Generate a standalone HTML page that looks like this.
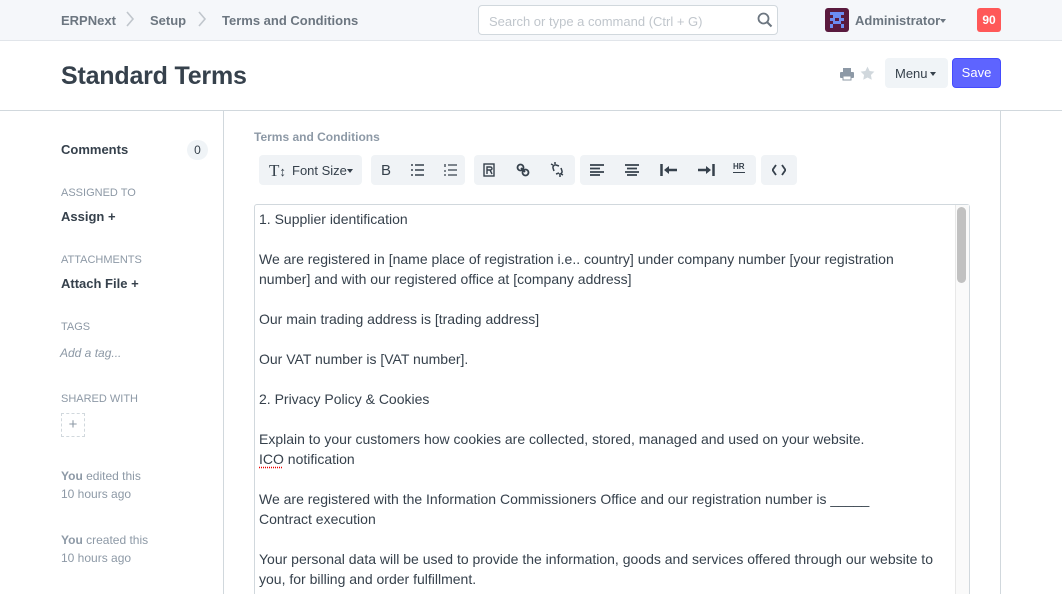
<!DOCTYPE html>
<html style="width:1062px;height:594px;overflow:hidden"><head><meta charset="utf-8"><style>
*{box-sizing:border-box;margin:0;padding:0}
body{width:1062px;height:594px;overflow:hidden;font-family:"Liberation Sans",Helvetica,Arial,sans-serif;background:#fff;color:#36414c;position:relative}
.nav{position:absolute;left:0;top:0;width:1062px;height:41px;background:#f5f7fa;border-bottom:1px solid #e1e5ea}
.abs{position:absolute}
.bc{font-size:13px;font-weight:bold;color:#6c7680;top:13px}
.chev{top:11px;width:10px;height:16px}
.search{left:478px;top:5px;width:300px;height:30px;border:1px solid #d1d8dd;border-radius:4px;background:#fff;font-size:13px;color:#c0c6cc;padding:8px 10px}
.title{left:61px;top:62px;font-size:25px;color:#36414c;font-weight:bold;letter-spacing:-0.2px}
.hline{left:0;top:110px;width:1062px;height:1px;background:#d1d8dd}
.vline{top:110px;width:1px;height:484px;background:#d1d8dd}
.sb{font-size:11px;color:#8d99a6;left:61px}
.sbb{font-size:13px;font-weight:bold;color:#36414c;left:61px}
.tb{top:155px;height:30px;background:#f0f3f6;border-radius:4px}
.ed{left:254px;top:204px;width:716px;height:390px;border:1px solid #d1d8dd;border-bottom:none;border-radius:3px 3px 0 0}
.txt{position:absolute;left:259px;top:209px;font-size:14px;line-height:20px;color:#36414c;white-space:pre;height:385px;overflow:hidden}
</style></head><body>
<div class="nav"></div>
<div class="abs bc" style="left:61px">ERPNext</div>
<svg class="abs chev" style="left:125px" viewBox="0 0 10 16"><path d="M2 1l6 7-6 7" fill="none" stroke="#c0c6cc" stroke-width="1.6"/></svg>
<div class="abs bc" style="left:150px">Setup</div>
<svg class="abs chev" style="left:197px" viewBox="0 0 10 16"><path d="M2 1l6 7-6 7" fill="none" stroke="#c0c6cc" stroke-width="1.6"/></svg>
<div class="abs bc" style="left:222px">Terms and Conditions</div>
<div class="abs search">Search or type a command (Ctrl + G)</div>
<svg class="abs" style="left:757px;top:12px" width="16" height="16" viewBox="0 0 16 16"><circle cx="6.5" cy="6.5" r="5" fill="none" stroke="#6c7680" stroke-width="1.8"/><path d="M10 10l4.5 4.5" stroke="#6c7680" stroke-width="2"/></svg>
<svg class="abs" style="left:825px;top:8px" width="24" height="24" viewBox="0 0 24 24"><rect width="24" height="24" rx="3" fill="#5a1a3e"/><path d="M5 4h14v3h-3v3h3v3h-3v3h3v4h-3v-4H8v4H5v-4h3v-3H5v-3h3V7H5z" fill="#6b8cf2"/><rect x="10" y="10" width="4" height="3" fill="#5a1a3e"/></svg>
<div class="abs" style="left:855px;top:13px;font-size:13px;font-weight:bold;color:#6c7680">Administrator</div>
<div class="abs" style="left:940px;top:19px;width:0;height:0;border-left:3px solid transparent;border-right:3px solid transparent;border-top:4px solid #6c7680"></div>
<div class="abs" style="left:977px;top:8px;width:24px;height:24px;border-radius:3px;background:#ff5858;color:#fff;font-size:12px;font-weight:bold;text-align:center;line-height:24px">90</div>

<div class="abs title">Standard Terms</div>
<svg class="abs" style="left:840px;top:67px" width="14" height="14" viewBox="0 0 14 14"><rect x="3" y="1" width="8" height="4" fill="#8d99a6"/><rect x="0" y="5" width="14" height="6" rx="1" fill="#8d99a6"/><rect x="3" y="9" width="8" height="4" fill="#fff" stroke="#8d99a6"/></svg>
<svg class="abs" style="left:860px;top:66px" width="15" height="15" viewBox="0 0 24 24"><path d="M12 1l3.4 7 7.6 1-5.5 5.3 1.3 7.7L12 18.3 5.2 22l1.3-7.7L1 9l7.6-1z" fill="#d1d8dd"/></svg>
<div class="abs" style="left:885px;top:58px;width:63px;height:30px;background:#f0f4f7;border-radius:4px"></div>
<div class="abs" style="left:895px;top:66px;font-size:13px;color:#36414c">Menu</div>
<div class="abs" style="left:930px;top:72px;width:0;height:0;border-left:3px solid transparent;border-right:3px solid transparent;border-top:4px solid #36414c"></div>
<div class="abs" style="left:952px;top:58px;width:49px;height:30px;background:#5e64ff;border:1px solid #444bff;border-radius:4px;font-size:13px;color:#fff;line-height:28px;text-align:center">Save</div>

<div class="abs hline"></div>
<div class="abs vline" style="left:223px"></div>
<div class="abs vline" style="left:1000px"></div>

<div class="abs sbb" style="top:142px">Comments</div>
<div class="abs" style="left:187px;top:140px;width:21px;height:20px;border-radius:10px;background:#f0f4f7;font-size:12px;text-align:center;line-height:20px">0</div>
<div class="abs sb" style="top:187px">ASSIGNED TO</div>
<div class="abs sbb" style="top:209px">Assign +</div>
<div class="abs sb" style="top:254px">ATTACHMENTS</div>
<div class="abs sbb" style="top:276px">Attach File +</div>
<div class="abs sb" style="top:321px">TAGS</div>
<div class="abs" style="left:60px;top:346px;font-size:12px;font-style:italic;color:#8d99a6">Add a tag...</div>
<div class="abs sb" style="top:393px">SHARED WITH</div>
<div class="abs" style="left:61px;top:413px;width:24px;height:24px;border:1px dashed #d1d8dd;color:#8d99a6;font-size:15px;text-align:center;line-height:21px">+</div>
<div class="abs" style="left:61px;top:467px;font-size:12px;color:#8d99a6;line-height:18px"><b>You</b> edited this<br>10 hours ago</div>
<div class="abs" style="left:61px;top:531px;font-size:12px;color:#8d99a6;line-height:18px"><b>You</b> created this<br>10 hours ago</div>

<div class="abs" style="left:254px;top:130px;font-size:12px;font-weight:bold;color:#8d99a6">Terms and Conditions</div>
<div class="abs tb" style="left:259px;width:103px"></div>
<div class="abs" style="left:269px;top:161px;font-family:'Liberation Serif',serif;font-size:17px;color:#36414c">T<span style="font-size:13px">↕</span></div>
<div class="abs" style="left:292px;top:163px;font-size:13px">Font Size</div>
<div class="abs" style="left:347px;top:169px;border-left:3px solid transparent;border-right:3px solid transparent;border-top:4px solid #36414c"></div>
<div class="abs tb" style="left:371px;width:94px"></div>
<div class="abs" style="left:381px;top:162px;font-size:15px">B</div>
<svg class="abs" style="left:411px;top:164px" width="13" height="12" viewBox="0 0 13 12"><path d="M0 1h2M0 6h2M0 11h2M4 1h9M4 6h9M4 11h9" stroke="#36414c" stroke-width="1.6"/></svg>
<svg class="abs" style="left:444px;top:164px" width="13" height="12" viewBox="0 0 13 12"><path d="M4 1h9M4 6h9M4 11h9M1 0v3M0 7h2M0 11h2" stroke="#36414c" stroke-width="1.3"/></svg>
<div class="abs tb" style="left:474px;width:101px"></div>
<svg class="abs" style="left:483px;top:163px" width="12" height="14" viewBox="0 0 12 14"><rect x="1" y="1" width="10" height="12" fill="none" stroke="#36414c" stroke-width="1.4"/><path d="M4 11V4h3.5a1.5 1.5 0 010 3H4M7 7l2 4" stroke="#36414c" stroke-width="1.4" fill="none"/></svg>
<svg class="abs" style="left:516px;top:163px" width="14" height="14" viewBox="0 0 14 14"><circle cx="4.5" cy="4.5" r="3" fill="none" stroke="#36414c" stroke-width="1.8"/><circle cx="9.5" cy="9.5" r="3" fill="none" stroke="#36414c" stroke-width="1.8"/><path d="M5 5l4 4" stroke="#36414c" stroke-width="1.8"/></svg>
<svg class="abs" style="left:550px;top:162px" width="15" height="15" viewBox="0 0 15 15"><path d="M3 6a2.5 2.5 0 013-3M9 12a2.5 2.5 0 003-3M6 3l3 1M6 12l3-1M12 9l-1-3M3 6l1 3M1 2l2 1M13 13l-2-1M5 0v2M10 15v-2" fill="none" stroke="#36414c" stroke-width="1.5"/></svg>
<div class="abs tb" style="left:580px;width:176px"></div>
<svg class="abs" style="left:590px;top:164px" width="14" height="12" viewBox="0 0 14 12"><path d="M0 1h14M0 4.5h10M0 8h14M0 11h10" stroke="#36414c" stroke-width="1.8"/></svg>
<svg class="abs" style="left:625px;top:164px" width="14" height="12" viewBox="0 0 14 12"><path d="M0 1h14M2 4.5h10M0 8h14M2 11h10" stroke="#36414c" stroke-width="1.8"/></svg>
<svg class="abs" style="left:660px;top:164px" width="18" height="12" viewBox="0 0 18 12"><path d="M1.5 0v12M17 6H7" stroke="#36414c" stroke-width="2.5"/><path d="M4 6l5-4v8z" fill="#36414c"/></svg>
<svg class="abs" style="left:697px;top:164px" width="18" height="12" viewBox="0 0 18 12"><path d="M16.5 0v12M1 6h10" stroke="#36414c" stroke-width="2.5"/><path d="M14 6l-5-4v8z" fill="#36414c"/></svg>
<div class="abs" style="left:733px;top:162px;font-size:8px;font-weight:bold;border-bottom:1.5px solid #36414c;line-height:10px">HR</div>
<div class="abs tb" style="left:761px;width:36px"></div>
<svg class="abs" style="left:772px;top:164px" width="14" height="12" viewBox="0 0 14 12"><path d="M4 1L0.5 6 4 11M10 1l3.5 5-3.5 5" fill="none" stroke="#36414c" stroke-width="1.8"/></svg>

<div class="abs ed"></div>
<div class="abs" style="left:955px;top:205px;width:14px;height:389px;background:#fafafa;border-left:1px solid #e8e8e8"></div>
<div class="abs" style="left:957px;top:207px;width:9px;height:76px;background:#c1c1c1;border-radius:5px"></div>
<div class="txt">1. Supplier identification

We are registered in [name place of registration i.e.. country] under company number [your registration
number] and with our registered office at [company address]

Our main trading address is [trading address]

Our VAT number is [VAT number].

2. Privacy Policy &amp; Cookies

Explain to your customers how cookies are collected, stored, managed and used on your website.
<span style="text-decoration:underline dotted #e00;text-underline-offset:3px">ICO</span> notification

We are registered with the Information Commissioners Office and our registration number is _____
Contract execution

Your personal data will be used to provide the information, goods and services offered through our website to
you, for billing and order fulfillment.
Tealium and ...</div>
</body></html>
